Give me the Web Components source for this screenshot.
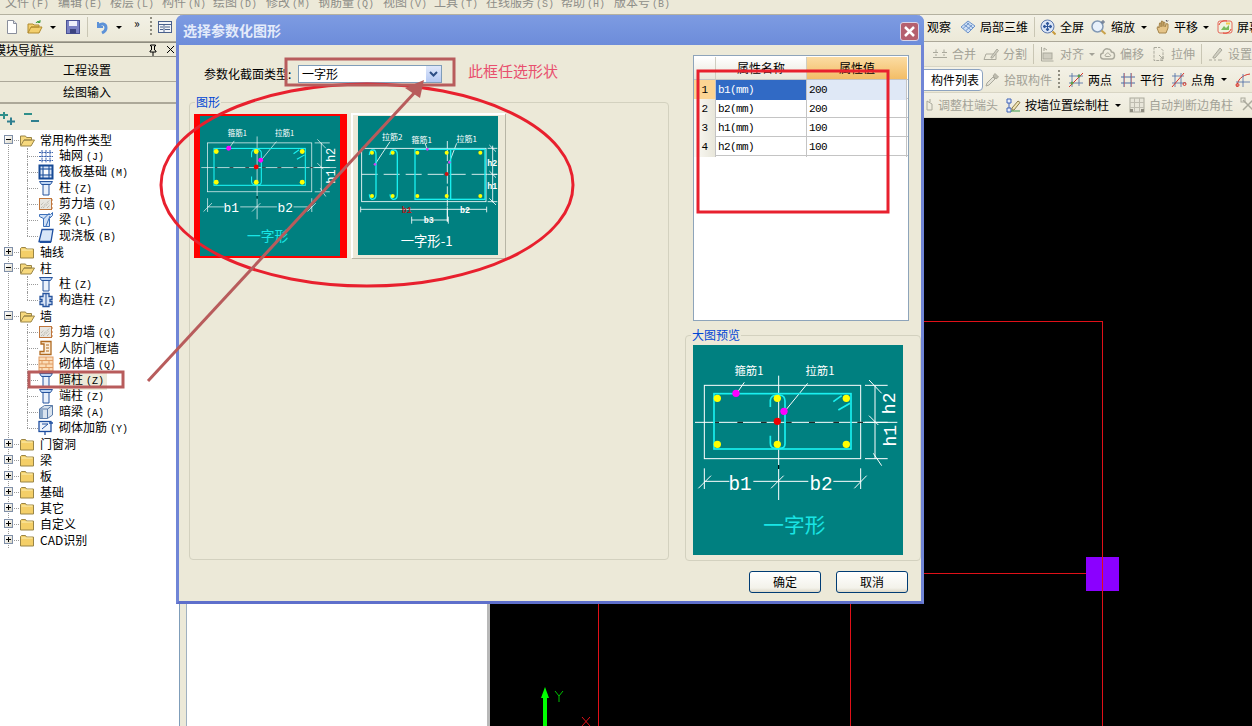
<!DOCTYPE html>
<html lang="zh">
<head>
<meta charset="utf-8">
<title>选择参数化图形</title>
<style>
	html, body { margin: 0; padding: 0; background: #ece9d8; }
	body { font: 12px/16px "Noto Sans CJK SC", "Liberation Sans", sans-serif; color: #000; overflow: hidden; }
</style>
</head>
<body>
<cad-app>
	<menu-bar slot="menu">
		<menu-item label="文件" key="(F)" style="margin-left:5px;width:53px"></menu-item>
		<menu-item label="编辑" key="(E)" style="width:52px"></menu-item>
		<menu-item label="楼层" key="(L)" style="width:52px"></menu-item>
		<menu-item label="构件" key="(N)" style="width:51px"></menu-item>
		<menu-item label="绘图" key="(D)" style="width:53px"></menu-item>
		<menu-item label="修改" key="(M)" style="width:52px"></menu-item>
		<menu-item label="钢筋量" key="(Q)" style="width:65px"></menu-item>
		<menu-item label="视图" key="(V)" style="width:51px"></menu-item>
		<menu-item label="工具" key="(T)" style="width:52px"></menu-item>
		<menu-item label="在线服务" key="(S)" style="width:75px"></menu-item>
		<menu-item label="帮助" key="(H)" style="width:53px"></menu-item>
		<menu-item label="版本号" key="(B)"></menu-item>
	</menu-bar>

	<tool-row slot="top">
		<tool-item icon="new" style="margin-left:4px"></tool-item>
		<tool-item icon="open" style="margin-left:7px"></tool-item>
		<tool-caret style="margin-left:7px"></tool-caret>
		<tool-item icon="save" style="margin-left:9px"></tool-item>
		<tool-sep style="margin-left:6px"></tool-sep>
		<tool-item icon="undo" style="margin-left:6px"></tool-item>
		<tool-caret style="margin-left:6px"></tool-caret>
		<tool-item label="»" style="margin-left:12px;width:8px;margin-top:-8px"></tool-item>
		<tool-grip style="margin-left:8px"></tool-grip>
		<tool-item icon="panel" style="margin-left:5px"></tool-item>
		<tool-item label="观察" style="margin-left:754px"></tool-item>
		<tool-item icon="part3d" label="局部三维" style="margin-left:9px"></tool-item>
		<tool-sep style="margin-left:6px"></tool-sep>
		<tool-item icon="fullscreen" label="全屏" style="margin-left:5px"></tool-item>
		<tool-item icon="zoom" label="缩放" style="margin-left:7px"></tool-item>
		<tool-caret style="margin-left:6px"></tool-caret>
		<tool-item icon="pan" label="平移" style="margin-left:7px"></tool-item>
		<tool-caret style="margin-left:5px"></tool-caret>
		<tool-item icon="screen" label="屏幕" style="margin-left:8px"></tool-item>
	</tool-row>

	<nav-panel slot="nav">
		<tree-row kind="open" label="常用构件类型"></tree-row>
		<tree-row icon="grid" label="轴网" key="(J)"></tree-row>
		<tree-row icon="raft" label="筏板基础" key="(M)"></tree-row>
		<tree-row icon="column" label="柱" key="(Z)"></tree-row>
		<tree-row icon="shear" label="剪力墙" key="(Q)"></tree-row>
		<tree-row icon="beam" label="梁" key="(L)"></tree-row>
		<tree-row icon="slab" label="现浇板" key="(B)" last></tree-row>
		<tree-row kind="closed" label="轴线"></tree-row>
		<tree-row kind="open" label="柱"></tree-row>
		<tree-row icon="column" label="柱" key="(Z)"></tree-row>
		<tree-row icon="constr" label="构造柱" key="(Z)" last></tree-row>
		<tree-row kind="open" label="墙"></tree-row>
		<tree-row icon="shear" label="剪力墙" key="(Q)"></tree-row>
		<tree-row icon="doorwall" label="人防门框墙"></tree-row>
		<tree-row icon="brick" label="砌体墙" key="(Q)"></tree-row>
		<tree-row icon="column" label="暗柱" key="(Z)" selected></tree-row>
		<tree-row icon="column" label="端柱" key="(Z)"></tree-row>
		<tree-row icon="hidbeam" label="暗梁" key="(A)"></tree-row>
		<tree-row icon="rebar" label="砌体加筋" key="(Y)" last></tree-row>
		<tree-row kind="closed" label="门窗洞"></tree-row>
		<tree-row kind="closed" label="梁"></tree-row>
		<tree-row kind="closed" label="板"></tree-row>
		<tree-row kind="closed" label="基础"></tree-row>
		<tree-row kind="closed" label="其它"></tree-row>
		<tree-row kind="closed" label="自定义"></tree-row>
		<tree-row kind="closed" label="CAD识别"></tree-row>
	</nav-panel>

	<tool-row slot="tools">
		<tool-item icon="merge" label="合并" muted style="margin-left:752px"></tool-item>
		<tool-item icon="split" label="分割" muted style="margin-left:7px"></tool-item>
		<tool-sep style="margin-left:6px"></tool-sep>
		<tool-item icon="align" label="对齐" muted style="margin-left:6px"></tool-item>
		<tool-caret muted style="margin-left:5px"></tool-caret>
		<tool-item icon="offset" label="偏移" muted style="margin-left:5px"></tool-item>
		<tool-item icon="stretch" label="拉伸" muted style="margin-left:7px"></tool-item>
		<tool-sep style="margin-left:6px"></tool-sep>
		<tool-item icon="setting" label="设置" muted style="margin-left:6px"></tool-item>
	</tool-row>
	<tool-row slot="tools" style="height:26px">
		<tool-tab style="margin-left:740px">构件列表</tool-tab>
		<tool-item icon="picker" label="拾取构件" muted style="margin-left:1px"></tool-item>
		<tool-grip style="margin-left:6px"></tool-grip>
		<tool-item icon="twopoint" label="两点" style="margin-left:8px"></tool-item>
		<tool-item icon="parallel" label="平行" style="margin-left:8px"></tool-item>
		<tool-item icon="angle" label="点角" style="margin-left:7px"></tool-item>
		<tool-caret style="margin-left:6px"></tool-caret>
		<tool-item icon="arc" style="margin-left:8px"></tool-item>
	</tool-row>
	<tool-row slot="tools">
		<tool-item icon="trim" label="调整柱端头" muted style="margin-left:738px"></tool-item>
		<tool-item icon="wallpos" label="按墙位置绘制柱" style="margin-left:7px"></tool-item>
		<tool-caret style="margin-left:6px"></tool-caret>
		<tool-item icon="auto" label="自动判断边角柱" muted style="margin-left:8px"></tool-item>
		<tool-item icon="corner" muted style="margin-left:7px"></tool-item>
	</tool-row>

	<work-area slot="work"></work-area>

	<param-dialog slot="overlay" heading="选择参数化图形">
		<prop-row slot="props" idx="1" name="b1" value="200" selected></prop-row>
		<prop-row slot="props" idx="2" name="b2" value="200"></prop-row>
		<prop-row slot="props" idx="3" name="h1" value="100"></prop-row>
		<prop-row slot="props" idx="4" name="h2" value="100"></prop-row>
	</param-dialog>
	<markup-layer slot="overlay"></markup-layer>
</cad-app>

<script>
	const CJK = '"Noto Sans CJK SC", "Liberation Sans", sans-serif';
	const MONO = '"Liberation Mono", monospace';

	const ICONS = {
		new: '<path d="M3.500 1.500h6l3 3v10h-9z" fill="#fff" stroke="#8a8f9c"/><path d="M9.500 1.500v3h3" fill="#dfe3ea" stroke="#8a8f9c"/>',
		open: '<path d="M1 14V5h5l1 1h5v2H4L1 14h11l3-6H4" fill="#f3cf6d" stroke="#b08a2e"/><path d="M9 4c1-2 3-2 4-1m0-2v2.500h-2.500" fill="none" stroke="#3f9a3f"/>',
		save: '<rect x="1.500" y="1.500" width="13" height="13" fill="#7b82c4" stroke="#4a5296"/><rect x="4" y="2" width="8" height="5" fill="#eef0fa"/><rect x="5" y="10" width="6" height="4.500" fill="#3c4480"/>',
		undo: '<path d="M4 3v5h5" fill="none" stroke="#5d92d8" stroke-width="2"/><path d="M4 7.500c3-4 8-3 8 1.500 0 2.500-2 4-4 5" fill="none" stroke="#5d92d8" stroke-width="3"/>',
		panel: '<rect x="1.500" y="2.500" width="13" height="11" fill="#f2f4f8" stroke="#49608c"/><path d="M1.500 5.500h13M3 8h3M3 10.500h3M8 8h5M8 10.500h5M7 5.500v8" stroke="#49608c" fill="none"/>',
		part3d: '<path d="M1 8l7-6 7 5-7 7z" fill="#cfe0f6" stroke="#6d93c9"/><path d="M4 5.500l7 5.500M6.500 3.500l6.500 5.500M3 9.500l6-5.500M6 11.500l6-5.500" stroke="#6d93c9" fill="none"/>',
		fullscreen: '<circle cx="7.500" cy="7.500" r="6.500" fill="#dbe6f7" stroke="#5b78ad"/><path d="M7.500 3v9M3 7.500h9M7.500 3l-1.500 2h3zM7.500 12l-1.500-2h3zM3 7.500l2-1.500v3zM12 7.500l-2-1.500v3z" stroke="#2f579b" fill="#2f579b"/><path d="M12.500 12.500l3 3" stroke="#c79a3c" stroke-width="2"/>',
		zoom: '<circle cx="6.500" cy="7.500" r="5.500" fill="#e8f1fb" stroke="#8299b5" stroke-width="1.500"/><path d="M10.500 11.500l4 3.500" stroke="#c9a24a" stroke-width="2"/><path d="M12 1v4M10 3h4" stroke="#5a6a84"/>',
		pan: '<path d="M3 9l2 5h7l2-5V5l-1.500-.500L11 8V3.500L9.500 3 9 7.500V2.500L7.500 2 7 8V4L5.500 4l-.500 5-1-1.500z" fill="#e5c488" stroke="#a4844a"/><path d="M12 1l1 1.500M14 1.500l-1 1" stroke="#445"/>',
		screen: '<rect x="1" y="2" width="14" height="12" rx="2" fill="#eef3e0" stroke="#e5665a"/><path d="M4 11l3-4 2 2 3-3v5z" fill="#7cbc5c"/><rect x="9" y="3.500" width="4" height="2" fill="#f2c94c"/><path d="M2 6c1-3 4-5 8-4M14 10c-1 3-4 5-8 4" stroke="#e5402e" fill="none"/>',
		merge: '<path d="M1 6.500h5M10 6.500h5M1 11.500h14M4 6.500v-3M12 6.500v-3M3 9h2M11 9h2" stroke="#aaa99c" fill="none"/>',
		split: '<path d="M1 13.500h12M3 8h10M3 8L1 13.500M13 8v5.500" stroke="#aaa99c" fill="none"/><path d="M8 11l6-8 1.500 1.500-6 7.500H8z" fill="#d0cfc2" stroke="#aaa99c"/>',
		align: '<path d="M1.500 1v14h12" stroke="#aaa99c" fill="none"/><rect x="3" y="7" width="9" height="6" fill="#cfcdc0" stroke="#aaa99c"/><path d="M4 5V2l3 2" stroke="#aaa99c" fill="none"/>',
		offset: '<path d="M4 13a3 3 0 0 1-1-6c0-3 3-5 5-4 2 0 3 1 3.500 3 4 0 4 7 0 7z" fill="none" stroke="#aaa99c" stroke-width="1.500"/><path d="M6 10.500c-1 0-1.500-2 0-2 .5-2 3-2 3.500 0 1.500 0 1.500 2 0 2z" fill="none" stroke="#aaa99c"/>',
		stretch: '<path d="M3 1.500h6l3 3v10H3z" fill="none" stroke="#aaa99c" stroke-dasharray="3 1"/><path d="M8 9l4 4M12 10v3H9" stroke="#aaa99c" fill="none"/>',
		setting: '<path d="M1 14h3M6 14h2M10 14h4" stroke="#aaa99c"/><path d="M5 11l7-9 2 2-7 8H5z" fill="#d0cfc2" stroke="#aaa99c"/>',
		picker: '<path d="M2 14l1-3 6-6 2 2-6 6z" fill="#e4e2d6" stroke="#aaa99c"/><path d="M9 4l2-2.500 3.500 3.500L12 7z" fill="#bdbbae" stroke="#aaa99c"/>',
		twopoint: '<path d="M4 1v14M1 4h14M11 2v12M1 11h14" stroke="#4a6aa5" fill="none" stroke-width=".8"/><path d="M1 15L15 1" stroke="#d8352b"/><circle cx="11" cy="4" r="1.500" fill="#5aa04a"/><circle cx="4" cy="11" r="1.500" fill="#5aa04a"/>',
		parallel: '<path d="M4 1v14M11 1v14M1 5h14M1 11h14" stroke="#4a6aa5" fill="none"/><path d="M4.500 1v14M11.500 1v14" stroke="#d8605a" fill="none" stroke-width=".5"/>',
		angle: '<path d="M4 1v14M1 4h12M10 1v14M1 11h14" stroke="#4a6aa5" fill="none" stroke-width=".8"/><path d="M1 15L13 1" stroke="#d8352b"/><circle cx="13.500" cy="12" r="1.500" fill="none" stroke="#d8352b"/>',
		arc: '<path d="M2 15C2 8 7 3 15 2" stroke="#d8352b" fill="none"/><path d="M1 10h14M8 2v13" stroke="#4a6aa5" fill="none" stroke-width=".8"/><circle cx="2.500" cy="13" r="1.500" fill="none" stroke="#d8352b"/>',
		trim: '<path d="M9 4l5 3v6H9z" fill="none" stroke="#aaa99c"/><path d="M12 2v3" stroke="#aaa99c"/>',
		wallpos: '<path d="M2 2h4v4H2zM2 11h4v4H2zM4 6v5" fill="#e6eefb" stroke="#3f63b8"/><path d="M7 11l6-7 2 1.500-6 7.500H7z" fill="#f2e6b4" stroke="#8a7a4a"/><path d="M6 14h9" stroke="#3a9a4a"/>',
		auto: '<rect x="1" y="1" width="14" height="14" fill="#e8e6da" stroke="#aaa99c"/><path d="M5.500 1v14M10.500 1v14M1 5.500h14M1 10.500h14" stroke="#bebcb0"/><rect x="1" y="12" width="3" height="3" fill="#8e8c80"/><rect x="12" y="12" width="3" height="3" fill="#8e8c80"/>',
		corner: '<path d="M3 3l10 10M13 3L3 13" stroke="#aaa99c" stroke-width="1.500"/><rect x="1" y="1" width="4" height="4" fill="none" stroke="#aaa99c"/>',
		grid: '<path d="M1 4.500h14M1 8.500h14M1 12.500h14M4 2v13M8 2v13M12 2v13" stroke="#3b62ad" stroke-dasharray="2 .6"/>',
		raft: '<rect x="1.500" y="1.500" width="13" height="13" fill="#dbe6f7" stroke="#174a96" stroke-width="2"/><path d="M5 1v14M11 1v14M1 5h14M1 11h14" stroke="#174a96"/><rect x="6" y="6" width="4" height="4" fill="#fff"/>',
		column: '<path d="M1.500 1.500h13l-2 3h-9z" fill="#bcd4f3" stroke="#27549e"/><path d="M5 4.500h6V15H5z" fill="#eaf1fb" stroke="#27549e"/>',
		shear: '<rect x="1.500" y="2.500" width="12" height="11" fill="#e8e6e0" stroke="#c0763c"/><path d="M3 12l9-8M5 12l6-5M3 9l3-3M9 12l3-3" stroke="#a9a69c" stroke-dasharray="1 1"/><path d="M14 3v2M14 7v2M14 11v2" stroke="#c0763c"/>',
		beam: '<path d="M1.500 2.500h11l2-2v3l-3 3v8h-6v-8l-4-2z" fill="#cfe0f6" stroke="#3b6fb8"/><path d="M5.500 14V7l6-6M8 14l4-10" stroke="#3b6fb8" fill="none"/>',
		slab: '<path d="M4 1.500h11l-2 12H1z" fill="#d8e6f8" stroke="#1f4fa0" stroke-width="1.300"/><path d="M1 13.500l1 1.500h11l0-1.500" fill="#1f4fa0"/>',
		constr: '<path d="M5 1.500h6v3h3v3h-2v2h2v3h-3v2H5v-2H2v-3h2v-2H2v-3h3z" fill="#dbe6f7" stroke="#27549e" stroke-width="1.300"/><path d="M8 2v12" stroke="#27549e"/>',
		doorwall: '<path d="M3 1.500h10v13H2v-3h4V4H3z" fill="#fbeedb" stroke="#b06a20" stroke-width="1.300"/><path d="M8 5h3M8 8h3M8 11h3" stroke="#b06a20"/>',
		brick: '<rect x="1" y="1" width="14" height="14" fill="#fbdcb8" stroke="#e09a60"/><path d="M1 4.500h14M1 8h14M1 11.500h14M8 1v3.500M4 4.500V8M11 4.500V8M8 8v3.500M4 11.500V15M11 11.500V15" stroke="#e09a60"/>',
		hidbeam: '<path d="M1.500 5l5-3.500h8V11l-5 3.500h-8z" fill="#d9e3ee" stroke="#5a7ba8"/><path d="M1.500 5h8v9.500M9.500 5l5-3.500" fill="none" stroke="#5a7ba8"/><rect x="2" y="5.500" width="3" height="8.500" fill="#8ea9c8"/>',
		rebar: '<rect x="1" y="1.500" width="12" height="10" fill="#eef3fb" stroke="#1f4fa0" stroke-width="1.300"/><path d="M4 9l6-5M4 4h6" stroke="#1f4fa0"/><path d="M7 11v4M11 3h4" stroke="#1f4fa0" stroke-width="1.300"/>',
		folderOpen: '<path d="M1.500 13V4h5l1 1.500h5V8H5l-3.500 6h10.500L15.500 8H5" fill="#f7d97e" stroke="#9a8546"/>',
		folderClosed: '<path d="M1.500 14V4.500l1-1h4l1 1.500h7v9z" fill="#f4cf68" stroke="#9a8546"/><path d="M2.500 6h11" stroke="#fdf0b4"/>'
	};

	function iconSvg(name, size = 16) {
		return `<svg width="${size}" height="${size}" viewBox="0 0 16 16">${ICONS[name] || ''}</svg>`;
	}

	class CadApp extends HTMLElement {
		constructor() {
			super();
			this.attachShadow({ mode: 'open' });
			this.shadowRoot.innerHTML = `
				<style>
					:host { display: block; position: relative; width: 1252px; height: 726px; overflow: hidden; background: #ece9d8; }
					#shell { display: flex; flex-direction: column; height: 100%; }
					#body { flex: 1; display: flex; min-height: 0; }
					#right { flex: 1; display: flex; flex-direction: column; min-width: 0; }
				</style>
				<div id="shell">
					<slot name="menu"></slot>
					<slot name="top"></slot>
					<div id="body">
						<slot name="nav"></slot>
						<div id="right">
							<slot name="tools"></slot>
							<slot name="work"></slot>
						</div>
					</div>
				</div>
				<slot name="overlay"></slot>
			`;
		}
	}

	class MenuBar extends HTMLElement {
		constructor() {
			super();
			this.attachShadow({ mode: 'open' });
			this.shadowRoot.innerHTML = `
				<style>
					:host { display: flex; height: 14px; overflow: hidden; border-bottom: 1px solid #b4b1a0; background: #ece9d8; }
				</style>
				<slot></slot>
			`;
		}
	}

	class MenuItem extends HTMLElement {
		connectedCallback() {
			const root = this.shadowRoot || this.attachShadow({ mode: 'open' });
			root.innerHTML = `
				<style>
					:host { display: block; flex: none; margin-top: -6px; height: 16px; color: #8e8e88; font: 12px/16px ${CJK}; white-space: nowrap; }
					b { font: 10px/16px ${MONO}; margin-left: 2px; }
				</style>
				${this.getAttribute('label')}<b>${this.getAttribute('key')}</b>
			`;
		}
	}

	class ToolRow extends HTMLElement {
		constructor() {
			super();
			this.attachShadow({ mode: 'open' });
			this.shadowRoot.innerHTML = `
				<style>
					:host { display: flex; flex: none; align-items: center; box-sizing: border-box; height: 25px; overflow: hidden; white-space: nowrap; background: linear-gradient(#f3f1e6, #ece9d8); border-bottom: 1px solid #d8d5c4; }
					:host([slot="top"]) { height: 27px; padding-bottom: 2px; border-bottom: 1px solid #aca899; }
				</style>
				<slot></slot>
			`;
		}
	}

	class ToolItem extends HTMLElement {
		connectedCallback() {
			const root = this.shadowRoot || this.attachShadow({ mode: 'open' });
			const icon = this.getAttribute('icon');
			const label = this.getAttribute('label');
			root.innerHTML = `
				<style>
					:host { display: inline-flex; flex: none; align-items: center; gap: 4px; height: 16px; font: 12px/16px ${CJK}; color: #000; }
					:host([muted]) { color: #a3a297; }
					svg { display: block; flex: none; }
				</style>
				${icon ? iconSvg(icon) : ''}${label ? `<span>${label}</span>` : ''}
			`;
		}
	}

	class ToolCaret extends HTMLElement {
		constructor() {
			super();
			this.attachShadow({ mode: 'open' });
			this.shadowRoot.innerHTML = `
				<style>
					:host { display: block; flex: none; width: 0; height: 0; border: 3px solid transparent; border-top: 3px solid #000; border-bottom: 0; }
					:host([muted]) { border-top-color: #a3a297; }
				</style>
			`;
		}
	}

	class ToolSep extends HTMLElement {
		constructor() {
			super();
			this.attachShadow({ mode: 'open' });
			this.shadowRoot.innerHTML = `<style>:host { display: block; flex: none; width: 1px; height: 20px; background: #c9c6b4; }</style>`;
		}
	}

	class ToolGrip extends HTMLElement {
		constructor() {
			super();
			this.attachShadow({ mode: 'open' });
			this.shadowRoot.innerHTML = `<style>:host { display: block; flex: none; width: 2px; height: 20px; background: repeating-linear-gradient(#8f8d80 0 2px, transparent 2px 4px); }</style>`;
		}
	}

	class ToolTab extends HTMLElement {
		constructor() {
			super();
			this.attachShadow({ mode: 'open' });
			this.shadowRoot.innerHTML = `
				<style>
					:host { display: block; flex: none; box-sizing: border-box; padding: 0 3px 0 10px; height: 22px; font: 12px/20px ${CJK}; background: #fff; border: 1px solid #8da3c0; border-radius: 4px; }
				</style>
				<slot></slot>
			`;
		}
	}

	class NavPanel extends HTMLElement {
		constructor() {
			super();
			this.attachShadow({ mode: 'open' });
			this.shadowRoot.innerHTML = `
				<style>
					:host { display: flex; flex-direction: column; flex: none; box-sizing: border-box; width: 180px; border-right: 1px solid #7f9db9; font: 12px/16px ${CJK}; background: #ece9d8; }
					#title { display: flex; align-items: center; height: 13px; border-top: 1px solid #8f8d80; border-bottom: 1px solid #8f8d80; overflow: hidden; }
					#title span { margin-left: -6px; white-space: nowrap; }
					#title svg { display: block; flex: none; }
					.bar { display: flex; align-items: center; justify-content: center; box-sizing: border-box; padding: 2px 5px 0 0; height: 25px; border-bottom: 1px solid #aca899; background: #ece9d8; }
					.bar.two { height: 22px; padding-top: 0; border-bottom: 2px solid #aca899; }
					#ops { display: flex; align-items: flex-start; gap: 6px; height: 26px; padding-top: 8px; box-sizing: border-box; }
					#tree { flex: 1; position: relative; background: #fff; padding-top: 2px; }
					#tree::before { content: ""; position: absolute; left: 8px; top: 10px; height: 408px; border-left: 1px dotted #9a9a9a; }
				</style>
				<div id="title">
					<span>模块导航栏</span>
					<svg style="margin-left:94px" width="10" height="12" viewBox="0 0 10 12"><path d="M2.500 1h5v1h-1v4l1.500 1v1h-6v-1l1.500-1V2h-1zM5 8v4" fill="none" stroke="#000"/></svg>
					<svg style="margin-left:8px" width="9" height="9" viewBox="0 0 9 9"><path d="M1 1l7 7M8 1L1 8" stroke="#000"/></svg>
				</div>
				<div class="bar">工程设置</div>
				<div class="bar two">绘图输入</div>
				<div id="ops">
					<svg width="16" height="13" viewBox="0 0 16 13"><path d="M0 3h8M4 -1v8" stroke="#2f8f8a" stroke-width="2"/><path d="M7 9.500h8M11 5.500v8" stroke="#2f7f8f" stroke-width="2"/></svg>
					<svg style="margin-left:1px" width="16" height="13" viewBox="0 0 16 13"><path d="M1 2h8" stroke="#2f8f8a" stroke-width="2"/><path d="M8 9h8" stroke="#2f7f8f" stroke-width="2"/></svg>
				</div>
				<div id="tree"><slot></slot></div>
			`;
		}
	}

	class TreeRow extends HTMLElement {
		connectedCallback() {
			const root = this.shadowRoot || this.attachShadow({ mode: 'open' });
			const kind = this.getAttribute('kind');
			const key = this.getAttribute('key');
			const text = `<span id="label">${this.getAttribute('label')}${key ? `<b>${key}</b>` : ''}</span>`;
			let inner;
			if (kind) {
				inner = `
					<i id="hl"></i>
					<span id="exp">${kind === 'open' ? '<u></u>' : '<u></u><s></s>'}</span>
					${iconSvg(kind === 'open' ? 'folderOpen' : 'folderClosed')}
					${text}
				`;
			} else {
				inner = `<i id="v"></i><i id="h"></i>${iconSvg(this.getAttribute('icon'))}${text}`;
			}
			root.innerHTML = `
				<style>
					:host { display: flex; align-items: center; position: relative; height: 16px; font: 12px/16px ${CJK}; white-space: nowrap; padding-left: ${kind ? '19px' : '38px'}; }
					svg { display: block; flex: none; position: relative; }
					#label { margin-left: 5px; padding-right: 2px; }
					b { font: 10px/16px ${MONO}; margin-left: 3px; }
					:host([selected]) #label { background: #ece9d8; padding-right: 3px; }
					i { position: absolute; display: block; }
					#hl { left: 9px; top: 8px; width: 10px; border-top: 1px dotted #9a9a9a; }
					#h { left: 27px; top: 8px; width: 11px; border-top: 1px dotted #9a9a9a; }
					#v { left: 27px; top: 0; bottom: 0; border-left: 1px dotted #9a9a9a; }
					:host([last]) #v { bottom: 8px; }
					#exp { position: absolute; left: 4px; top: 3px; box-sizing: border-box; width: 9px; height: 9px; border: 1px solid #7f8fa8; background: linear-gradient(135deg, #fff, #dcd8c8); }
					#exp u { position: absolute; left: 1px; top: 3px; width: 5px; height: 1px; background: #000; }
					#exp s { position: absolute; left: 3px; top: 1px; width: 1px; height: 5px; background: #000; }
				</style>
				${inner}
			`;
		}
	}

	class WorkArea extends HTMLElement {
		constructor() {
			super();
			this.attachShadow({ mode: 'open' });
			this.shadowRoot.innerHTML = `
				<style>
					:host { display: flex; flex: 1; min-height: 0; background: #ece9d8; }
					#list { flex: none; box-sizing: border-box; width: 301px; margin-left: 6px; background: #fff; border-left: 1px solid #9fb0c0; }
					#grip { flex: none; width: 3px; background: #b8b8b8; }
					#canvas { flex: 1; background: #000; min-width: 0; }
				</style>
				<div id="list"></div>
				<div id="grip"></div>
				<div id="canvas">
					<svg width="762" height="608" viewBox="490 118 762 608" style="display:block">
						<rect x="598" y="118" width="1" height="608" fill="#e01018"/>
						<rect x="850" y="118" width="1" height="608" fill="#e01018"/>
						<rect x="598" y="321" width="505" height="1" fill="#e01018"/>
						<rect x="598" y="573" width="505" height="1" fill="#e01018"/>
						<rect x="1086" y="557" width="33" height="34" fill="#8b00ff"/>
						<rect x="1102" y="321" width="1" height="405" fill="#e01018"/>
						<path d="M545 697V726" stroke="#00ff00" stroke-width="4"/>
						<path d="M545 687l-4 11h8z" fill="#00ff00"/>
						<path d="M555 691l4 5 4-5M559 696v6" stroke="#00c000" fill="none"/>
						<path d="M582 717l8 9M590 717l-8 9" stroke="#e01018"/>
					</svg>
				</div>
			`;
		}
	}

	class GroupBox extends HTMLElement {
		connectedCallback() {
			const root = this.shadowRoot || this.attachShadow({ mode: 'open' });
			root.innerHTML = `
				<style>
					:host { display: block; position: relative; box-sizing: border-box; border: 1px solid #d3d1bf; border-radius: 4px; }
					#t { position: absolute; left: 5px; top: -9px; padding: 0 1px; color: #0046d5; background: #ece9d8; font: 12px/16px ${CJK}; }
				</style>
				<span id="t">${this.getAttribute('heading')}</span>
				<slot></slot>
			`;
		}
	}

	class RebarFigure extends HTMLElement {
		connectedCallback() {
			const root = this.shadowRoot || this.attachShadow({ mode: 'open' });
			const size = this.getAttribute('size') || 210;
			const body = this.getAttribute('variant') === 'b' ? this.figureB(size) : this.figureA(size);
			root.innerHTML = `
				<style>
					:host { display: block; width: ${size}px; background: #008080; }
					svg { display: block; }
					text { font-family: ${CJK}; fill: #fff; }
					.m { font-family: ${MONO}; }
				</style>
				${body}
			`;
		}

		figureA(size) {
			return `<svg width="${size}" height="${size}" viewBox="24 60 630 630">
				<g fill="none" stroke="#fff" stroke-width="3">
					<rect x="58" y="181" width="469" height="220"/>
					<path d="M30 292H637M281 152V420M281 432V525"/>
					<path d="M540 181H608M540 292H608M540 401H608M570 181V401M552 165L590 205M552 272L580 300M565 385L590 422"/>
					<path d="M58 430V492M527 430V492M40 490L78 452M258 490L296 452M508 490L545 452M58 469H133M205 469H370M445 469H527"/>
					<path d="M178 172L155 205M368 175L300 258"/>
				</g>
				<path d="M90 292h12M157 292h17M228 292h17M303 292h17M372 292h18M445 292h17M517 292h17M281 420v12" stroke="#000" stroke-width="3"/>
				<g fill="none" stroke="#19f0f0" stroke-width="5">
					<rect x="87" y="206" width="411" height="166"/>
					<path d="M256 246V226Q258 210 276 210H284Q300 212 300 228V356Q300 370 284 370H272Q256 370 256 354V332"/>
					<path d="M445 230L470 212M460 255L495 235"/>
				</g>
				<g fill="#ffff00">
					<circle cx="97" cy="220" r="11"/><circle cx="277" cy="220" r="11"/><circle cx="484" cy="220" r="11"/>
					<circle cx="97" cy="358" r="11"/><circle cx="277" cy="358" r="11"/><circle cx="484" cy="358" r="11"/>
				</g>
				<circle cx="153" cy="205" r="11" fill="#ff00ff"/>
				<circle cx="297" cy="259" r="11" fill="#ff00ff"/>
				<circle cx="277" cy="289" r="11" fill="#f00000"/>
				<text x="192" y="149" font-size="34" text-anchor="middle">箍筋1</text>
				<text x="405" y="149" font-size="34" text-anchor="middle">拉筋1</text>
				<text class="m" x="165" y="494" font-size="58" text-anchor="middle">b1</text>
				<text class="m" x="408" y="494" font-size="58" text-anchor="middle">b2</text>
				<text class="m" font-size="54" text-anchor="middle" transform="translate(630 235) rotate(-90)">h2</text>
				<text class="m" font-size="54" text-anchor="middle" transform="translate(632 332) rotate(-90)">h1</text>
				<text x="328" y="624" font-size="62" text-anchor="middle" style="fill:#19e5e5">一字形</text>
			</svg>`;
		}

		figureB(size) {
			return `<svg width="${size}" height="${size * 417 / 420}" viewBox="504 33 420 417">
				<g fill="none" stroke="#fff" stroke-width="2.500">
					<rect x="515" y="130" width="373" height="160"/>
					<path d="M772 108V350" stroke-dasharray="60 8"/>
					<path d="M515 208H922" stroke-dasharray="48 18"/>
					<path d="M908 122V292M893 130H922M893 208H922M893 290H922M898 120L918 140M898 198L918 218M898 280L918 300"/>
					<path d="M512 313H890M512 305V322M772 305V350M890 305V322M665 345H775M665 335V356M775 335V356"/>
					<path d="M600 110L555 178M705 115L712 133M800 115L778 172"/>
				</g>
				<g fill="none" stroke="#19f0f0" stroke-width="4">
					<rect x="675" y="133" width="210" height="150"/>
					<path d="M538 150Q540 133 550 135Q558 135 558 150V268Q558 283 548 283Q540 283 538 268"/>
					<path d="M600 150Q602 133 612 135Q622 135 622 150V268Q622 283 612 283Q602 283 600 268"/>
					<path d="M782 135V283"/>
				</g>
				<g fill="#ffff00">
					<circle cx="546" cy="143" r="6"/><circle cx="608" cy="143" r="6"/><circle cx="682" cy="143" r="6"/><circle cx="770" cy="143" r="6"/><circle cx="871" cy="143" r="6"/>
					<circle cx="546" cy="273" r="6"/><circle cx="608" cy="273" r="6"/><circle cx="682" cy="273" r="6"/><circle cx="770" cy="273" r="6"/><circle cx="871" cy="273" r="6"/>
				</g>
				<g fill="#d040f0"><circle cx="555" cy="178" r="4"/><circle cx="712" cy="133" r="4"/><circle cx="778" cy="172" r="4"/></g>
				<circle cx="770" cy="207" r="6" fill="#d01010"/>
				<text x="607" y="104" font-size="24" text-anchor="middle">拉筋2</text>
				<text x="695" y="114" font-size="24" text-anchor="middle">箍筋1</text>
				<text x="830" y="110" font-size="24" text-anchor="middle">拉筋1</text>
				<text class="m" x="907" y="182" font-size="25" text-anchor="middle" style="font-weight:bold">h2</text>
				<text class="m" x="907" y="252" font-size="25" text-anchor="middle" style="font-weight:bold">h1</text>
				<text class="m" x="650" y="324" font-size="25" text-anchor="middle" style="fill:#b01818;font-weight:bold">b1</text>
				<text class="m" x="825" y="324" font-size="25" text-anchor="middle" style="font-weight:bold">b2</text>
				<text class="m" x="716" y="354" font-size="25" text-anchor="middle" style="font-weight:bold">b3</text>
				<text x="710" y="423" font-size="40" text-anchor="middle">一字形-1</text>
			</svg>`;
		}
	}

	class PropRow extends HTMLElement {
		connectedCallback() {
			const root = this.shadowRoot || this.attachShadow({ mode: 'open' });
			root.innerHTML = `
				<style>
					:host { display: grid; grid-template-columns: 22px 91px 100px; height: 19px; box-sizing: border-box; border-bottom: 1px solid #c4c4c4; font: 11px/20px ${MONO}; letter-spacing: -.6px; }
					div { box-sizing: border-box; padding-left: 2px; border-right: 1px solid #c4c4c4; }
					#n { padding: 0; text-align: center; background: linear-gradient(90deg, #fbfaf5, #e8e6da); }
					:host([selected]) #n { background: #fcd593; }
					:host([selected]) #k { background: #316ac5; color: #fff; }
					:host([selected]) #w { background: #dfe8f6; }
				</style>
				<div id="n">${this.getAttribute('idx')}</div>
				<div id="k">${this.getAttribute('name')}(mm)</div>
				<div id="w">${this.getAttribute('value')}</div>
			`;
		}
	}

	class ParamDialog extends HTMLElement {
		connectedCallback() {
			const root = this.shadowRoot || this.attachShadow({ mode: 'open' });
			root.innerHTML = `
				<style>
					:host { display: flex; flex-direction: column; position: absolute; left: 176px; top: 15px; width: 748px; height: 589px; box-sizing: border-box; border: 3px solid #7085d6; border-top: 0; border-bottom-color: #5e6fcb; border-radius: 7px 7px 0 0; background: #ece9d8; font: 12px/16px ${CJK}; }
					#bar { flex: none; display: flex; align-items: center; justify-content: space-between; height: 30px; margin: 0 -3px; padding: 0 5px 0 7px; border-radius: 7px 7px 0 0; background: linear-gradient(#7d9be2, #6d8cda); }
					#bar span { color: #e4ebfa; font-size: 14px; font-weight: 700; }
					#close { position: relative; top: 1px; width: 19px; height: 19px; box-sizing: border-box; border: 1px solid #d8d4e8; border-radius: 3px; background: #b5606e; }
					#close svg { display: block; }
					#main { flex: 1; display: flex; min-height: 0; }
					#left { flex: none; width: 480px; margin-left: 10px; display: flex; flex-direction: column; }
					#pick { flex: none; display: flex; align-items: center; height: 18px; margin-top: 20px; margin-left: 15px; }
					#pick > span { width: 89px; white-space: nowrap; }
					#combo { display: flex; align-items: center; justify-content: space-between; box-sizing: border-box; width: 144px; height: 18px; margin-left: 5px; padding: 0 0 0 3px; background: #fff; border: 1px solid #7f9db9; }
					#drop { width: 15px; height: 16px; background: linear-gradient(#dfe8fb, #b4c8f2); display: flex; align-items: center; justify-content: center; }
					#shapes { flex: none; height: 458px; margin-top: 19px; }
					#thumbs { display: flex; gap: 4px; padding: 11px 0 0 4px; }
					.thumb { box-sizing: border-box; height: 144px; }
					#t1 { width: 153px; border: solid #ff0000; border-width: 2px 7px 2px 6px; }
					#t2 { width: 154px; height: 145px; margin-top: -1px; padding: 1px 0 0 5px; border: solid #fff; border-width: 2px 0 0 2px; box-shadow: 1px 1px 0 #b8b6a6; }
					#right { flex: none; width: 236px; margin-left: 16px; }
					prop-table { margin: 10px 0 0 8px; }
					#preview { height: 226px; margin-top: 14px; padding: 9px 0 0 7px; }
					#foot { flex: none; display: flex; justify-content: flex-end; gap: 15px; height: 40px; padding: 10px 13px 0 0; box-sizing: border-box; }
				</style>
				<div id="bar">
					<span>${this.getAttribute('heading')}</span>
					<div id="close"><svg width="17" height="17" viewBox="0 0 17 17"><path d="M4 4l9 9M13 4l-9 9" stroke="#fff" stroke-width="2.500"/></svg></div>
				</div>
				<div id="main">
					<div id="left">
						<div id="pick">
							<span>参数化截面类型:</span>
							<div id="combo"><span>一字形</span><div id="drop"><svg width="9" height="7" viewBox="0 0 9 7"><path d="M1 1l3.500 3.500L8 1" fill="none" stroke="#2c4d84" stroke-width="2"/></svg></div></div>
						</div>
						<group-box id="shapes" heading="图形">
							<div id="thumbs">
								<div class="thumb" id="t1"><rebar-figure size="140"></rebar-figure></div>
								<div class="thumb" id="t2"><rebar-figure size="140" variant="b"></rebar-figure></div>
							</div>
						</group-box>
					</div>
					<div id="right">
						<prop-table><slot name="props"></slot></prop-table>
						<group-box id="preview" heading="大图预览"><rebar-figure size="210"></rebar-figure></group-box>
					</div>
				</div>
				<div id="foot">
					<xp-button>确定</xp-button>
					<xp-button>取消</xp-button>
				</div>
			`;
		}
	}

	class PropTable extends HTMLElement {
		constructor() {
			super();
			this.attachShadow({ mode: 'open' });
			this.shadowRoot.innerHTML = `
				<style>
					:host { display: block; box-sizing: border-box; width: 216px; height: 266px; padding-top: 1px; background: #fff; border: 1px solid #8ea4ba; }
					#head { display: grid; grid-template-columns: 22px 91px 100px; height: 23px; line-height: 21px; text-align: center; border-bottom: 1px solid #c4c4c4; box-sizing: border-box; }
					#head div { background: linear-gradient(#fff, #e9e7db); border-right: 1px solid #cfcdc0; }
					#head div:last-child { background: linear-gradient(#fbdca3, #f3bd66); border-right: 0; }
				</style>
				<div id="head"><div></div><div>属性名称</div><div>属性值</div></div>
				<slot></slot>
			`;
		}
	}

	class XpButton extends HTMLElement {
		constructor() {
			super();
			this.attachShadow({ mode: 'open' });
			this.shadowRoot.innerHTML = `
				<style>
					:host { display: block; box-sizing: border-box; width: 72px; height: 22px; line-height: 20px; text-align: center; border: 1px solid #003c74; border-radius: 3px; background: linear-gradient(#fff, #f3f2ea 80%, #dcd8c8); }
				</style>
				<slot></slot>
			`;
		}
	}

	class MarkupLayer extends HTMLElement {
		constructor() {
			super();
			this.attachShadow({ mode: 'open' });
			this.shadowRoot.innerHTML = `
				<style>
					:host { display: block; position: absolute; left: 0; top: 0; width: 1252px; height: 726px; pointer-events: none; }
					svg { display: block; }
					text { font: 15px ${CJK}; fill: #e8506e; }
				</style>
				<svg width="1252" height="726" viewBox="0 0 1252 726">
					<ellipse cx="367" cy="185" rx="206" ry="101" fill="none" stroke="#e8202e" stroke-width="3"/>
					<rect x="698" y="71" width="190" height="141" fill="none" stroke="#e8202e" stroke-width="3"/>
					<rect x="286" y="59" width="168" height="26" fill="none" stroke="#b85c5c" stroke-width="3"/>
					<rect x="29" y="372" width="94" height="15" fill="none" stroke="#b85c5c" stroke-width="3"/>
					<path d="M148 381L417 90" stroke="#b85c5c" stroke-width="3" fill="none"/>
					<path d="M424 80L405 88L420 98z" fill="#b85c5c"/>
					<text x="468" y="77">此框任选形状</text>
				</svg>
			`;
		}
	}

	customElements.define('cad-app', CadApp);
	customElements.define('menu-bar', MenuBar);
	customElements.define('menu-item', MenuItem);
	customElements.define('tool-row', ToolRow);
	customElements.define('tool-item', ToolItem);
	customElements.define('tool-caret', ToolCaret);
	customElements.define('tool-sep', ToolSep);
	customElements.define('tool-grip', ToolGrip);
	customElements.define('tool-tab', ToolTab);
	customElements.define('nav-panel', NavPanel);
	customElements.define('tree-row', TreeRow);
	customElements.define('work-area', WorkArea);
	customElements.define('group-box', GroupBox);
	customElements.define('rebar-figure', RebarFigure);
	customElements.define('prop-row', PropRow);
	customElements.define('prop-table', PropTable);
	customElements.define('xp-button', XpButton);
	customElements.define('param-dialog', ParamDialog);
	customElements.define('markup-layer', MarkupLayer);
</script>
</body>
</html>
